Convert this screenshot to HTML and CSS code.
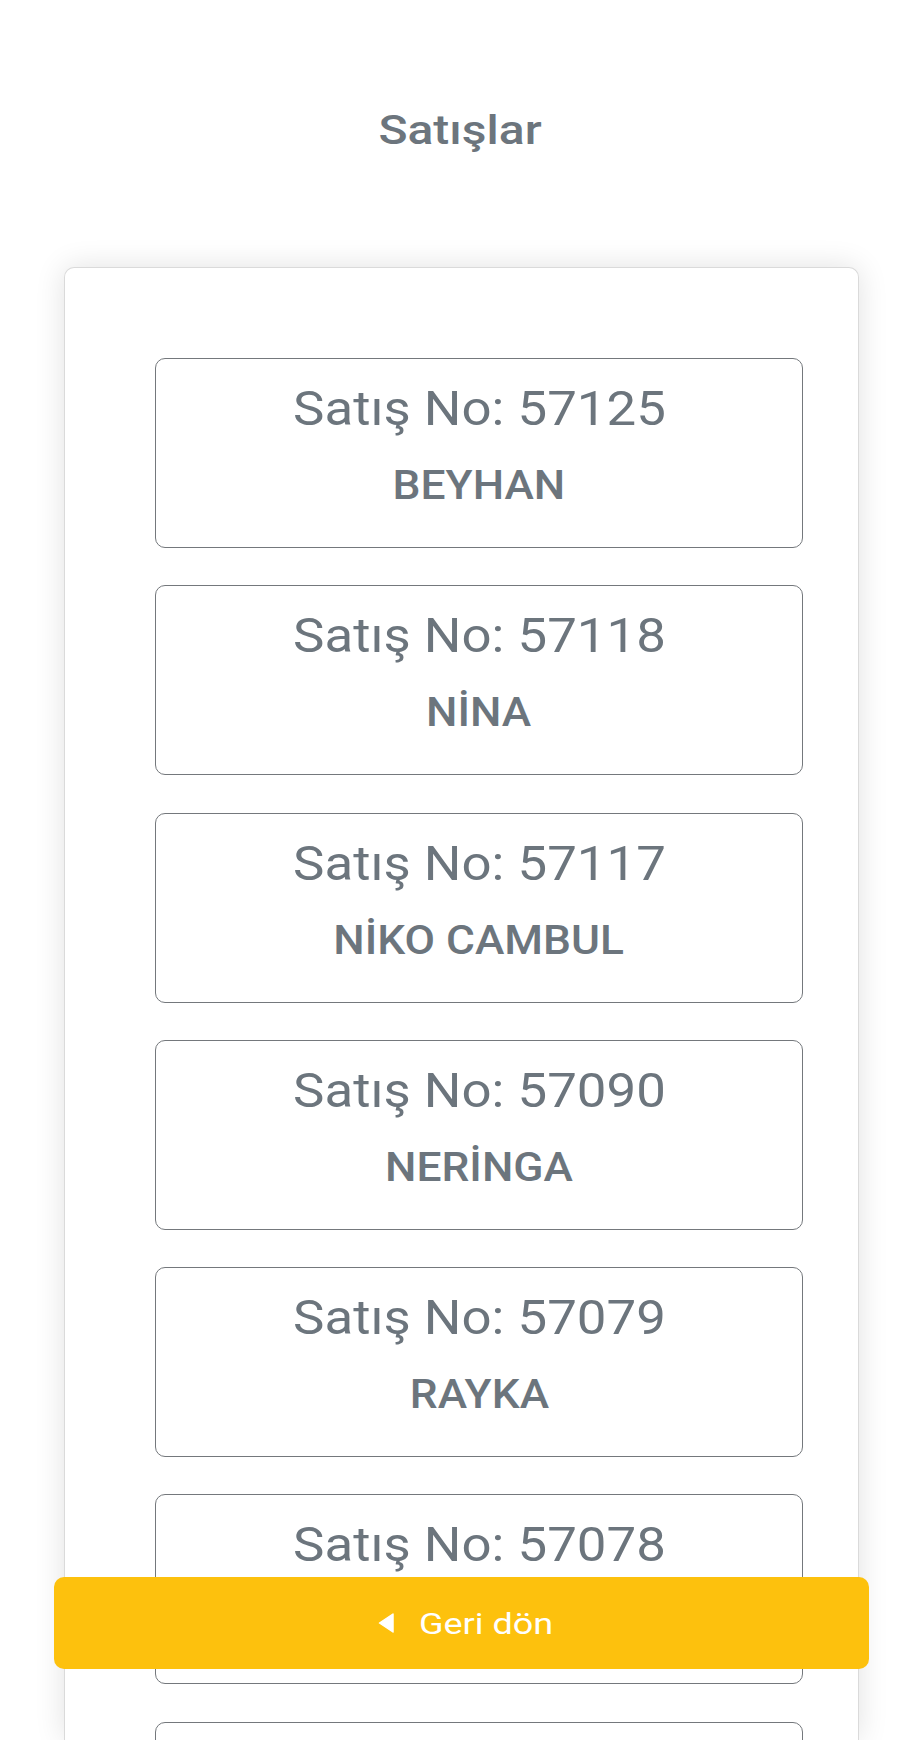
FILE: index.html
```html
<!DOCTYPE html>
<html lang="tr">
<head>
<meta charset="utf-8">
<title>Satışlar</title>
<link rel="stylesheet" href="styles.css">
</head>
<body>
<header class="page-header">
  <h1 class="page-title"><span class="wide wide-title">Satışlar</span></h1>
</header>
<main class="card">
  <ul class="sale-list">
    <li class="sale-item"><div class="sale-no"><span class="wide wide-no">Satış No: 57125</span></div><div class="sale-name"><span class="wide wide-name">BEYHAN</span></div></li>
    <li class="sale-item"><div class="sale-no"><span class="wide wide-no">Satış No: 57118</span></div><div class="sale-name"><span class="wide wide-name">NİNA</span></div></li>
    <li class="sale-item"><div class="sale-no"><span class="wide wide-no">Satış No: 57117</span></div><div class="sale-name"><span class="wide wide-name">NİKO CAMBUL</span></div></li>
    <li class="sale-item"><div class="sale-no"><span class="wide wide-no">Satış No: 57090</span></div><div class="sale-name"><span class="wide wide-name">NERİNGA</span></div></li>
    <li class="sale-item"><div class="sale-no"><span class="wide wide-no">Satış No: 57079</span></div><div class="sale-name"><span class="wide wide-name">RAYKA</span></div></li>
    <li class="sale-item"><div class="sale-no"><span class="wide wide-no">Satış No: 57078</span></div><div class="sale-name"><span class="wide wide-name">ELENA</span></div></li>
    <li class="sale-item"><div class="sale-no"><span class="wide wide-no">Satış No: 57071</span></div><div class="sale-name"><span class="wide wide-name">OLGA</span></div></li>
  </ul>
</main>
<button class="back-btn" type="button">
  <svg class="back-icon" width="16" height="20" viewBox="0 0 16 20" aria-hidden="true"><path d="M15 1 L1.5 10 L15 19 Z" fill="#fff" stroke="#fff" stroke-width="1.5" stroke-linejoin="round"/></svg>
  <span class="btn-label">Geri dön</span>
</button>
</body>
</html>
```

FILE: styles.css
```css
html, body {
  margin: 0;
  padding: 0;
  background: #fff;
}
html {
  height: 1740px;
  overflow: hidden;
}
body {
  font-family: Roboto, "Noto Sans", "Liberation Sans", sans-serif;
  color: #6c757d;
  height: 1740px;
  overflow: hidden;
}
.wide {
  display: inline-block;
  transform-origin: center;
}
.wide-title { transform: scaleX(1.2); }
.wide-no { transform: scaleX(1.1); }
.wide-name { transform: scaleX(1.08); }

.page-header {
  padding-top: 107px;
  height: 267px;
  box-sizing: border-box;
}
.page-title {
  margin: 0;
  text-align: center;
  font-size: 40px;
  line-height: 48px;
  font-weight: 500;
  color: #6c757d;
}
.card {
  display: block;
  margin-left: 64px;
  width: 795px;
  box-sizing: border-box;
  border: 1px solid #dadada;
  border-bottom: none;
  border-radius: 10px 10px 0 0;
  box-shadow: 0 0 30px rgba(0, 0, 0, 0.12);
  padding: 90px 55px 0 90px;
  height: 1473px;
  overflow: hidden;
  background: #fff;
}
.sale-list {
  list-style: none;
  margin: 0;
  padding: 0;
  display: flex;
  flex-direction: column;
  gap: 37.3px;
}
.sale-item {
  height: 190px;
  flex: none;
  box-sizing: border-box;
  border: 1.5px solid #74787c;
  border-radius: 10px;
  padding-top: 21px;
  display: flex;
  flex-direction: column;
  align-items: center;
}
.sale-no {
  font-size: 48px;
  line-height: 58px;
  font-weight: 400;
}
.sale-name {
  margin-top: 23px;
  font-size: 41px;
  line-height: 48px;
  font-weight: 500;
}
.back-btn {
  position: fixed;
  left: 54px;
  top: 1577px;
  width: 815px;
  height: 92px;
  border: none;
  border-radius: 10px;
  background: #fdc10d;
  color: #fff;
  font-family: Roboto, "Noto Sans", "Liberation Sans", sans-serif;
  font-size: 30px;
  font-weight: 400;
  display: flex;
  align-items: center;
  justify-content: flex-start;
  gap: 25px;
  padding: 0 0 0 324px;
}
.back-icon {
  display: block;
}
.btn-label {
  display: inline-block;
  transform: scaleX(1.2);
  transform-origin: left center;
}
```
